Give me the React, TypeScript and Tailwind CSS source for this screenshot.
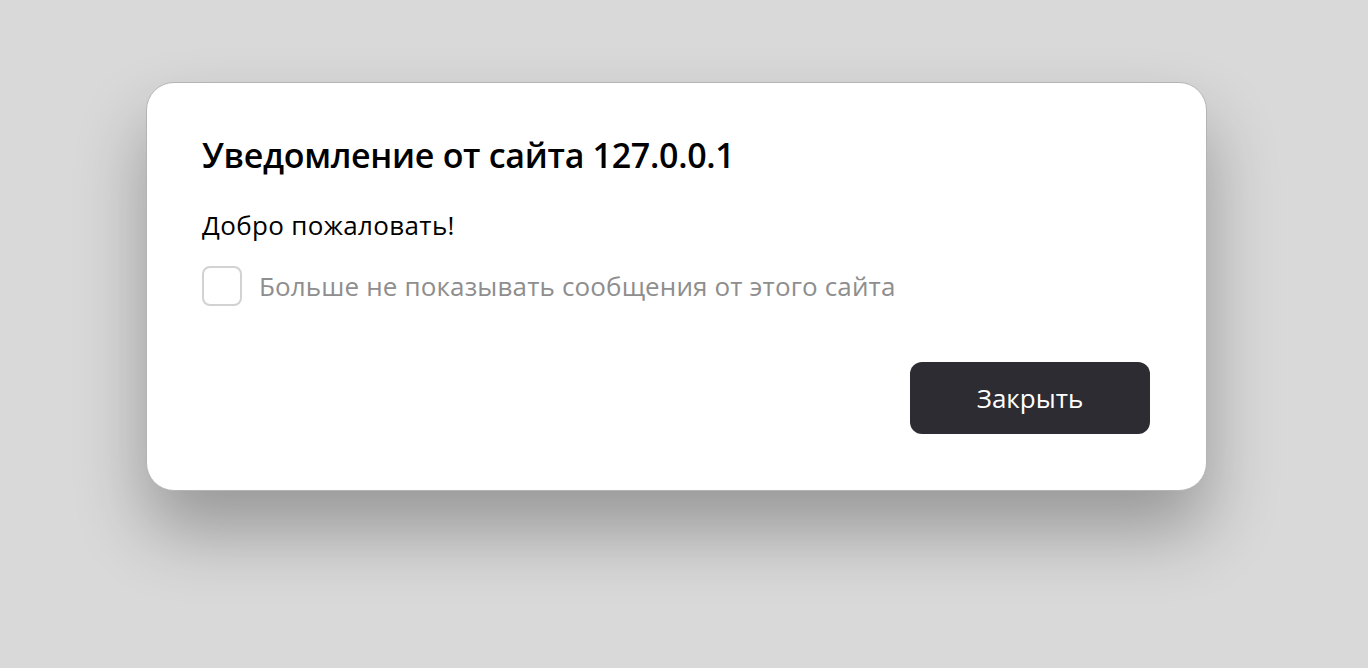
export default function App() {
  return (
    <div
      className="w-[1368px] h-[668px] bg-[#d9d9d9] pt-[82px] pl-[146px]"
      style={{ fontFamily: '"Open Sans", "Noto Sans", sans-serif' }}
    >
      <div className="w-[1061px] h-[409px] bg-white rounded-[28px] border border-[#b4b4b4] shadow-[0_40px_70px_rgba(0,0,0,0.3)] pl-[55px] pr-[56px] pt-[50px] pb-[56px] flex flex-col">
        <h1 className="text-[34px] leading-[44px] font-semibold text-black tracking-[-0.3px]">
          Уведомление от сайта 127.0.0.1
        </h1>
        <p className="mt-[32px] text-[26px] leading-[32px] text-black tracking-[0.35px]">Добро пожаловать!</p>
        <label className="mt-[25px] flex items-center gap-[17px]">
          <span className="w-[40px] h-[40px] rounded-[8px] border-2 border-[#d2d2d2] bg-white" />
          <span className="text-[26px] leading-[32px] text-[#8e8e8e] tracking-[0.14px]">
            Больше не показывать сообщения от этого сайта
          </span>
        </label>
        <div className="mt-auto flex justify-end">
          <button className="w-[240px] h-[72px] rounded-[12px] bg-[#2d2c33] text-white text-[26px]">
            Закрыть
          </button>
        </div>
      </div>
    </div>
  )
}
